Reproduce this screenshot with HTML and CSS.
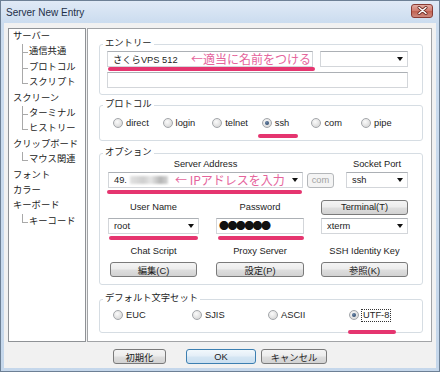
FILE: index.html
```html
<!DOCTYPE html>
<html lang="ja">
<head>
<meta charset="utf-8">
<title>Server New Entry</title>
<link rel="stylesheet" href="styles.css">
</head>
<body>
<div class="window">
  <div class="titlebar">
    <span class="title">Server New Entry</span>
    <span class="close"><svg width="11" height="9" viewBox="0 0 11 9"><path d="M2 1.5 L9 7.5 M9 1.5 L2 7.5" stroke="#6a2a22" stroke-width="3" stroke-linecap="round"/><path d="M2 1.5 L9 7.5 M9 1.5 L2 7.5" stroke="#ffffff" stroke-width="1.5" stroke-linecap="round"/></svg></span>
  </div>
  <div class="client">
    <div class="main">
      <ul class="tree">
        <li>サーバー
          <ul class="sub"><li>通信共通</li><li>プロトコル</li><li>スクリプト</li></ul>
        </li>
        <li>スクリーン
          <ul class="sub"><li>ターミナル</li><li>ヒストリー</li></ul>
        </li>
        <li>クリップボード
          <ul class="sub"><li>マウス関連</li></ul>
        </li>
        <li>フォント</li>
        <li>カラー</li>
        <li>キーボード
          <ul class="sub"><li>キーコード</li></ul>
        </li>
      </ul>
      <div class="panel">
        <div class="group g1">
          <div class="gtitle">エントリー</div>
          <div class="gbody">
            <div class="row r-entry">
              <div class="field name">さくらVPS 512<span class="note">←適当に名前をつける</span><i class="mark m-name"></i></div>
              <div class="combo entry-combo"><span class="arrow"></span></div>
            </div>
            <div class="field wide"></div>
          </div>
        </div>
        <div class="group g2">
          <div class="gtitle">プロトコル</div>
          <div class="gbody">
            <div class="radios six">
              <span class="radio"><i class="dot"></i>direct</span>
              <span class="radio"><i class="dot"></i>login</span>
              <span class="radio"><i class="dot"></i>telnet</span>
              <span class="radio on"><i class="dot"></i>ssh<i class="mark m-ssh"></i></span>
              <span class="radio"><i class="dot"></i>com</span>
              <span class="radio"><i class="dot"></i>pipe</span>
            </div>
          </div>
        </div>
        <div class="group g3">
          <div class="gtitle">オプション</div>
          <div class="gbody">
            <div class="row r1">
              <span class="lbl addr-w">Server Address</span>
              <span class="lbl port-w">Socket Port</span>
            </div>
            <div class="row r2">
              <div class="combo addr-w">49.<span class="blur"></span><span class="note">← IPアドレスを入力</span><span class="arrow"></span><i class="mark m-addr"></i></div>
              <span class="btn disabled com">com</span>
              <div class="combo port-w">ssh<span class="arrow"></span></div>
            </div>
            <div class="cols r3">
              <span class="lbl">User Name</span>
              <span class="lbl">Password</span>
              <span class="btn">Terminal(T)</span>
            </div>
            <div class="cols r4">
              <div class="combo">root<span class="arrow"></span><i class="mark m-user"></i></div>
              <div class="field pw"><span class="dots">●●●●●●</span><i class="mark m-pw"></i></div>
              <div class="combo">xterm<span class="arrow"></span></div>
            </div>
            <div class="cols r5">
              <span class="lbl">Chat Script</span>
              <span class="lbl">Proxy Server</span>
              <span class="lbl">SSH Identity Key</span>
            </div>
            <div class="cols r6">
              <span class="btn">編集(C)</span>
              <span class="btn">設定(P)</span>
              <span class="btn">参照(K)</span>
            </div>
          </div>
        </div>
        <div class="group g4">
          <div class="gtitle">デフォルト文字セット</div>
          <div class="gbody">
            <div class="radios four">
              <span class="radio"><i class="dot"></i>EUC</span>
              <span class="radio"><i class="dot"></i>SJIS</span>
              <span class="radio"><i class="dot"></i>ASCII</span>
              <span class="radio on"><i class="dot"></i><span class="focus">UTF-8</span><i class="mark m-utf"></i></span>
            </div>
          </div>
        </div>
      </div>
    </div>
    <div class="actions">
      <span class="btn b-init">初期化</span>
      <span class="btn b-ok">OK</span>
      <span class="btn b-cancel">キャンセル</span>
    </div>
  </div>
</div>
</body>
</html>
```

FILE: styles.css
```css
* { box-sizing: border-box; }
html, body { margin: 0; padding: 0; }
body {
  width: 440px;
  height: 372px;
  overflow: hidden;
  font-family: "Liberation Sans", "Noto Sans CJK JP", sans-serif;
  font-size: 9.3px;
  color: #1c1c1c;
  background: #c8d9ec;
}

.window {
  width: 440px;
  height: 372px;
  display: flex;
  flex-direction: column;
  border: 1px solid #6d8095;
  background: linear-gradient(#e0eaf6, #cbdcef 22px, #c5d7eb);
}

.titlebar {
  height: 22px;
  display: flex;
  align-items: center;
  justify-content: space-between;
  padding: 0 6px 0 5px;
}
.title {
  font-size: 10px;
  color: #1e3049;
}
.close {
  width: 22px;
  height: 14px;
  margin-top: -3px;
  border: 1px solid #8a3b33;
  border-radius: 3px;
  background: linear-gradient(#e2aca2, #cf7a6e 50%, #c1604f 51%, #cd8a7f);
  display: flex;
  align-items: center;
  justify-content: center;
}
.close svg { display: block; }

.client {
  flex: 1;
  margin: 0 3px 3px;
  background: #f1f1f1;
  padding: 5px 4px 0;
  display: flex;
  flex-direction: column;
}

.main {
  display: flex;
  gap: 1px;
  height: 314px;
}

/* tree */
.tree {
  width: 78px;
  margin: 0;
  padding: 0 0 0 4px;
  list-style: none;
  background: #fff;
  border: 1px solid #8f9296;
  line-height: 15.4px;
  color: #222;
}
.tree li { list-style: none; }
.sub {
  margin: 0;
  padding: 0 0 0 16px;
}
.sub li { position: relative; }
.sub li::before {
  content: "";
  position: absolute;
  left: -7px;
  top: 0;
  width: 5px;
  height: 50%;
  border-left: 1px solid #a9a9a9;
  border-bottom: 1px solid #a9a9a9;
}
.sub li:not(:last-child)::after {
  content: "";
  position: absolute;
  left: -7px;
  top: 50%;
  bottom: 0;
  border-left: 1px solid #a9a9a9;
}

/* right panel */
.panel {
  width: 345px;
  background: #fff;
  border: 1px solid #a2a4a7;
  padding: 15px 8px 0 11px;
}

.group {
  border: 1px solid #d6dde3;
  border-radius: 3px;
}
.gtitle {
  display: table;
  margin: -8px 0 0 3px;
  padding: 0 2px;
  background: #fff;
  line-height: 12px;
}
.g1 .gbody { padding: 2px 0 6px 7px; }
.g2 { margin-top: 10px; }
.g2 .gbody { padding: 6px 0 10px 13px; }
.g3 { margin-top: 12px; }
.g3 .gbody { padding: 0 0 7px 8px; }
.g4 { margin-top: 14px; }
.g4 .gbody { padding: 4px 0 10px 13px; }

.row { display: flex; align-items: center; }

.field, .combo {
  position: relative;
  height: 16px;
  background: #fff;
  border: 1px solid #d3d6da;
  border-top-color: #acb0b5;
  display: flex;
  align-items: center;
  padding: 0 4px 0 5px;
  white-space: nowrap;
}
.arrow {
  margin-left: auto;
  width: 0;
  height: 0;
  border-left: 3px solid transparent;
  border-right: 3px solid transparent;
  border-top: 4px solid #111;
}
.note {
  margin-left: auto;
  color: #e5649c;
  font-family: "Noto Sans CJK JP", sans-serif;
  font-size: 12px;
  line-height: 14px;
}

.r-entry { height: 16px; }
.name { width: 206px; padding-right: 1px; }
.entry-combo { width: 88px; margin-left: 7px; }
.wide { width: 301px; margin-top: 5px; }

/* pink annotation bars */
.mark {
  position: absolute;
  height: 4px;
  border-radius: 2px;
  background: #e5356f;
}
.m-name { left: 0; right: -3px; top: 15px; }
.m-addr { left: -2px; right: 0; top: 17px; }
.m-user { left: 0; right: 0; top: 17px; }
.m-pw { left: 1px; right: -1px; top: 17px; }
.m-ssh { left: -4px; width: 40px; top: 18px; }
.m-utf { left: -1px; width: 48px; top: 22px; }

/* radios */
.radios { display: grid; height: 14px; }
.six { grid-template-columns: repeat(6, 49.6px); }
.four { grid-template-columns: 79px 76px 81px auto; }
.radio {
  position: relative;
  display: flex;
  align-items: center;
  height: 14px;
  white-space: nowrap;
}
.dot {
  width: 10px;
  height: 10px;
  margin-right: 3px;
  border-radius: 50%;
  border: 1px solid #a3a6aa;
  background: radial-gradient(circle at 40% 35%, #fbfbfb, #dcdcdc 70%, #cfcfcf);
  display: flex;
  align-items: center;
  justify-content: center;
}
.radio.on .dot::before {
  content: "";
  width: 4px;
  height: 4px;
  border-radius: 50%;
  background: radial-gradient(circle at 40% 35%, #6a86a8, #1f3a5c);
}
.focus {
  outline: 1px dotted #333;
  padding: 0 1px;
  line-height: 11px;
}

/* option group rows */
.addr-w { width: 195px; }
.port-w { width: 62px; margin-left: auto; }
.lbl { text-align: center; white-space: nowrap; }
.r1 { height: 11px; width: 300px; }
.r1 .port-w { margin-left: 43px; }
.r2 { width: 300px; margin-top: 3px; height: 16px; }
.r2 .port-w { margin-left: 12px; }
.r2 .combo.addr-w { padding-left: 5px; }
.blur {
  width: 38px;
  height: 8px;
  margin-left: 3px;
  background: linear-gradient(90deg, #e2e2e2, #cfcfcf 35%, #e6e6e6 55%, #b5b5b5 80%, #d5d5d5);
  filter: blur(1px);
}
.com { width: 27px; height: 15px; margin-left: 4px; }

.cols {
  display: grid;
  grid-template-columns: 91px 88px 87px;
  justify-content: space-between;
  width: 300px;
  align-items: center;
}
.r3 { margin-top: 11px; height: 16px; }
.r3 .btn { height: 15px; }
.r4 { margin-top: 3px; height: 16px; }
.r5 { margin-top: 11px; height: 12px; }
.r6 { margin-top: 5px; height: 15px; }
.r6 .btn { height: 15px; }
.r6 .btn:first-child { margin-left: 2px; width: 87px; }
.pw { padding-left: 2px; }
.dots {
  font-family: "Noto Sans CJK JP", sans-serif;
  font-size: 10px;
  letter-spacing: -1.6px;
  color: #111;
  line-height: 12px;
}

/* buttons */
.btn {
  display: flex;
  align-items: center;
  justify-content: center;
  height: 15px;
  border: 1px solid #7a7a7a;
  border-radius: 3px;
  background: linear-gradient(#f4f4f4, #ececec 48%, #dedede 52%, #d2d2d2);
  white-space: nowrap;
  color: #1c1c1c;
}
.btn.disabled {
  border-color: #b4b7ba;
  background: #f4f4f4;
  color: #a2a2a2;
}

.actions {
  display: flex;
  margin-top: 7px;
  padding-left: 105px;
}
.b-init { width: 53px; }
.b-ok {
  width: 70px;
  margin-left: 20px;
  border-color: #3c7fb1;
  background: linear-gradient(#f2f8fc, #e3eef7 48%, #d5e6f3 52%, #cadff0);
}
.b-cancel { width: 66px; margin-left: 5px; }
```
